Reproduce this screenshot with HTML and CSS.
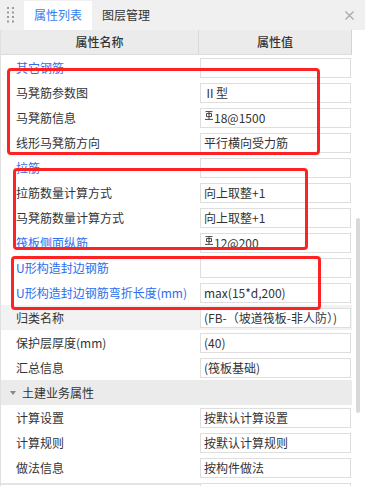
FILE: index.html
```html
<!DOCTYPE html>
<html>
<head>
<meta charset="utf-8">
<link rel="stylesheet" href="styles.css">
</head>
<body>
<div class="panel">
  <div class="tabbar">
    <svg class="grip" width="7" height="16" viewBox="0 0 7 16">
      <rect x="0" y="0" width="2" height="2" fill="#9a9a9a"/><rect x="5" y="0" width="2" height="2" fill="#9a9a9a"/>
      <rect x="0" y="4.5" width="2" height="2" fill="#9a9a9a"/><rect x="5" y="4.5" width="2" height="2" fill="#9a9a9a"/>
      <rect x="0" y="9" width="2" height="2" fill="#9a9a9a"/><rect x="5" y="9" width="2" height="2" fill="#9a9a9a"/>
      <rect x="0" y="13.5" width="2" height="2" fill="#9a9a9a"/><rect x="5" y="13.5" width="2" height="2" fill="#9a9a9a"/>
    </svg>
    <div class="tab active">属性列表</div>
    <div class="tab">图层管理</div>
    <div class="spacer"></div>
    <svg class="close" width="9" height="9" viewBox="0 0 9 9"><path d="M0.5 0.5 L8.5 8.5 M8.5 0.5 L0.5 8.5" stroke="#a8a8a8" stroke-width="1.2"/></svg>
  </div>
  <div class="content">
    <div class="grid">
      <div class="head">
        <div class="hname">属性名称</div>
        <div class="hval">属性值</div>
      </div>
      <div class="row"><div class="label blue">其它钢筋</div><div class="val"><div class="box"></div></div></div>
      <div class="row"><div class="label">马凳筋参数图</div><div class="val"><div class="box">Ⅱ型</div></div></div>
      <div class="row"><div class="label">马凳筋信息</div><div class="val"><div class="box"><svg class="steel" width="8" height="9" viewBox="0 0 8 9"><path d="M0.5 0.6 H7.5 M1.5 2.6 H6.5 V5.6 H1.5 Z M4 0.6 V8.4 M0 8.4 H8" stroke="#333" stroke-width="0.9" fill="none"/></svg>18@1500</div></div></div>
      <div class="row"><div class="label">线形马凳筋方向</div><div class="val"><div class="box">平行横向受力筋</div></div></div>
      <div class="row"><div class="label blue">拉筋</div><div class="val"><div class="box"></div></div></div>
      <div class="row"><div class="label">拉筋数量计算方式</div><div class="val"><div class="box">向上取整+1</div></div></div>
      <div class="row"><div class="label">马凳筋数量计算方式</div><div class="val"><div class="box">向上取整+1</div></div></div>
      <div class="row"><div class="label blue">筏板侧面纵筋</div><div class="val"><div class="box"><svg class="steel" width="8" height="9" viewBox="0 0 8 9"><path d="M0.5 0.6 H7.5 M1.5 2.6 H6.5 V5.6 H1.5 Z M4 0.6 V8.4 M0 8.4 H8" stroke="#333" stroke-width="0.9" fill="none"/></svg>12@200</div></div></div>
      <div class="row"><div class="label blue">U形构造封边钢筋</div><div class="val"><div class="box"></div></div></div>
      <div class="row"><div class="label blue">U形构造封边钢筋弯折长度(mm)</div><div class="val"><div class="box">max(15*d,200)</div></div></div>
      <div class="row hover"><div class="label">归类名称</div><div class="val"><div class="box">(FB-（坡道筏板-非人防）)</div></div></div>
      <div class="row"><div class="label">保护层厚度(mm)</div><div class="val"><div class="box">(40)</div></div></div>
      <div class="row"><div class="label">汇总信息</div><div class="val"><div class="box">(筏板基础)</div></div></div>
      <div class="row group"><svg class="tri" width="6" height="4" viewBox="0 0 6 4"><path d="M0 0 H6 L3 4 Z" fill="#888"/></svg><span>土建业务属性</span></div>
      <div class="row"><div class="label">计算设置</div><div class="val"><div class="box">按默认计算设置</div></div></div>
      <div class="row"><div class="label">计算规则</div><div class="val"><div class="box">按默认计算规则</div></div></div>
      <div class="row"><div class="label">做法信息</div><div class="val"><div class="box">按构件做法</div></div></div>
      <div class="row"><div class="label last"></div><div class="val"><div class="box"></div></div></div>
    </div>
    <div class="scroll"><div class="thumb"></div></div>

    <div class="mark m1"></div>
    <div class="mark m2"></div>
    <div class="mark m3"></div>
  </div>
</div>
</body>
</html>
```
FILE: styles.css
```css
* { box-sizing: border-box; }
html, body { margin: 0; padding: 0; background: #fff; }
body { font-family: "Noto Sans CJK SC", "Microsoft YaHei", sans-serif; font-size: 12px; color: #333; }
.panel { width: 365px; height: 486px; overflow: hidden; background: #fff; }

.tabbar { height: 30px; background: #f0f0f0; display: flex; align-items: stretch; }
.grip { margin: 7px 11px 0 7px; flex: none; }
.tab { padding: 0 10px; line-height: 28px; margin-top: 1px; font-size: 12px; color: #333; width: 68px; text-align: center; }
.tab.active { background: #fff; color: #2f7ef5; margin-left: -1px; }
.tab + .tab { width: auto; padding: 0 10px; }
.spacer { flex: 1; }
.close { margin: 11px 11px 0 0; flex: none; }

.content { position: relative; display: flex; }
.grid { width: 352px; border-left: 1px solid #e0e0e0; }
.head { height: 25px; display: flex; background: #ebebeb; border-bottom: 1px solid #dcdcdc; border-right: 1px solid #d4d4d4; }
.hname { width: 198px; border-right: 1px solid #d8d8d8; text-align: center; line-height: 24px; font-weight: 500; }
.hval { flex: 1; text-align: center; line-height: 24px; font-weight: 500; }

.row { height: 25px; display: flex; }
.label { width: 199px; padding-left: 15px; line-height: 25px; white-space: nowrap; }
.label.blue { color: #2c6cf0; }
.val { flex: 1; padding: 3px 1px 0 0; }
.box { height: 20px; border: 1px solid #dedede; background: #fff; padding-left: 3px; line-height: 18px; white-space: nowrap; overflow: hidden; display: flex; align-items: center; }
.steel { flex: none; margin: -5px 1px 0 1px; }
.row.hover { background: #f2f2f2; }
.row.group { background: #ebebeb; align-items: center; }
.tri { margin: 0 6px 0 9px; }
.label.last { border-top: 2px solid #e4e4e4; margin-top: 3px; }

.scroll { width: 13px; padding-top: 188px; padding-left: 4px; }
.thumb { width: 4px; height: 195px; background: #d9d9d9; border-radius: 2px; }

.mark { position: absolute; border: 3px solid #ff2222; border-radius: 4px; }
.m1 { left: 7px; top: 38px; width: 313px; height: 87px; }
.m2 { left: 13px; top: 138px; width: 295px; height: 82px; }
.m3 { left: 11px; top: 226px; width: 310px; height: 54px; }
```
